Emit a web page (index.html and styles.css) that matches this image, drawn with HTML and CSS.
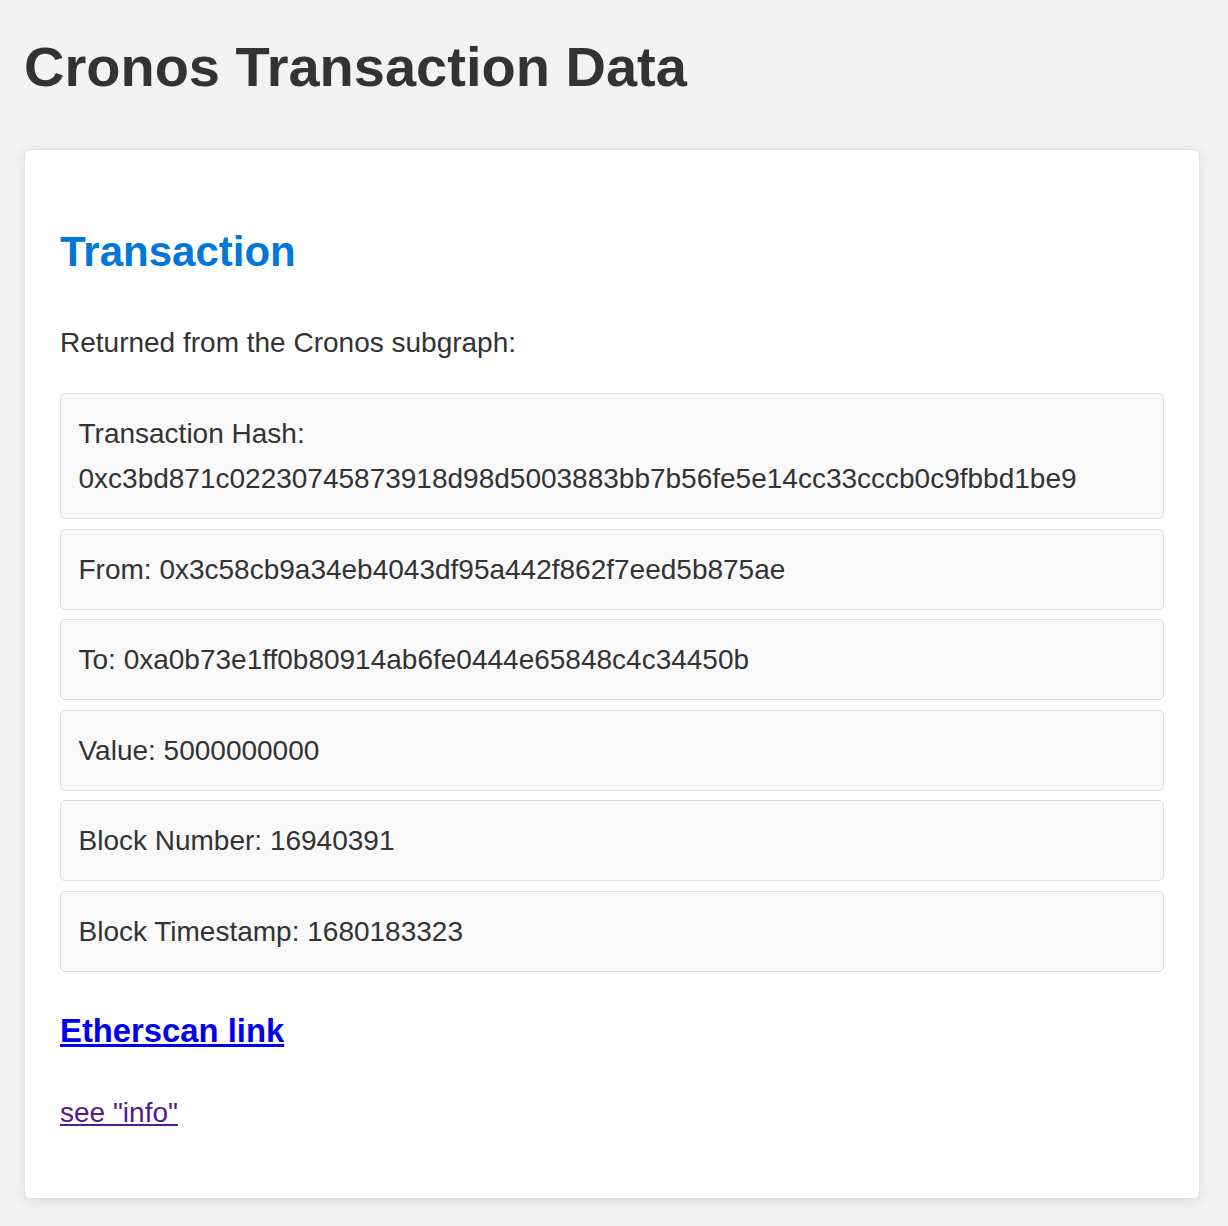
FILE: index.html
```html
<!DOCTYPE html>
<html lang="en">
<head>
<meta charset="utf-8">
<title>Cronos Transaction Data</title>
<link rel="stylesheet" href="styles.css">
</head>
<body>
  <h1 class="page-title">Cronos Transaction Data</h1>
  <main class="card">
    <h2 class="card-title">Transaction</h2>
    <p class="intro">Returned from the Cronos subgraph:</p>
    <div class="rows">
      <div class="row">Transaction Hash: 0xc3bd871c02230745873918d98d5003883bb7b56fe5e14cc33cccb0c9fbbd1be9</div>
      <div class="row">From: 0x3c58cb9a34eb4043df95a442f862f7eed5b875ae</div>
      <div class="row">To: 0xa0b73e1ff0b80914ab6fe0444e65848c4c34450b</div>
      <div class="row">Value: 5000000000</div>
      <div class="row">Block Number: 16940391</div>
      <div class="row">Block Timestamp: 1680183323</div>
    </div>
    <h3 class="scan"><a class="scan-link" href="#">Etherscan link</a></h3>
    <p class="info"><a class="info-link" href="#">see "info"</a></p>
  </main>
</body>
</html>
```

FILE: styles.css
```css
html, body {
  margin: 0;
}
body {
  background: #f3f3f3;
  color: #333333;
  font-family: "Liberation Sans", Arial, sans-serif;
  padding: 34px 28px 24px 24px;
}
.page-title {
  font-size: 56px;
  font-weight: bold;
  margin: 0 0 50px;
  line-height: normal;
}
.card {
  display: block;
  background: #ffffff;
  border: 1px solid #e2e2e2;
  border-radius: 6px;
  box-shadow: 0 2px 12px rgba(0, 0, 0, 0.1);
  padding: 35px;
}
.card-title {
  color: #0077d9;
  font-size: 42px;
  font-weight: bold;
  line-height: normal;
  margin: 43px 0 44px;
}
.intro {
  font-size: 28px;
  line-height: 45px;
  margin: 0 0 28px;
}
.rows {
  display: flex;
  flex-direction: column;
  gap: 9.5px;
}
.row {
  background: #f9f9f9;
  border: 1px solid #dddddd;
  border-radius: 5px;
  padding: 17px 17.5px;
  font-size: 28px;
  line-height: 45px;
  overflow-wrap: break-word;
}
.scan {
  font-size: 32.8px;
  font-weight: bold;
  line-height: normal;
  margin: 40px 0 40px;
}
.scan-link {
  color: #0000ee;
  text-decoration: underline;
}
.info {
  font-size: 28px;
  line-height: 45px;
  margin: 0 0 28px;
}
.info-link {
  color: #551a8b;
  text-decoration: underline;
}
```
